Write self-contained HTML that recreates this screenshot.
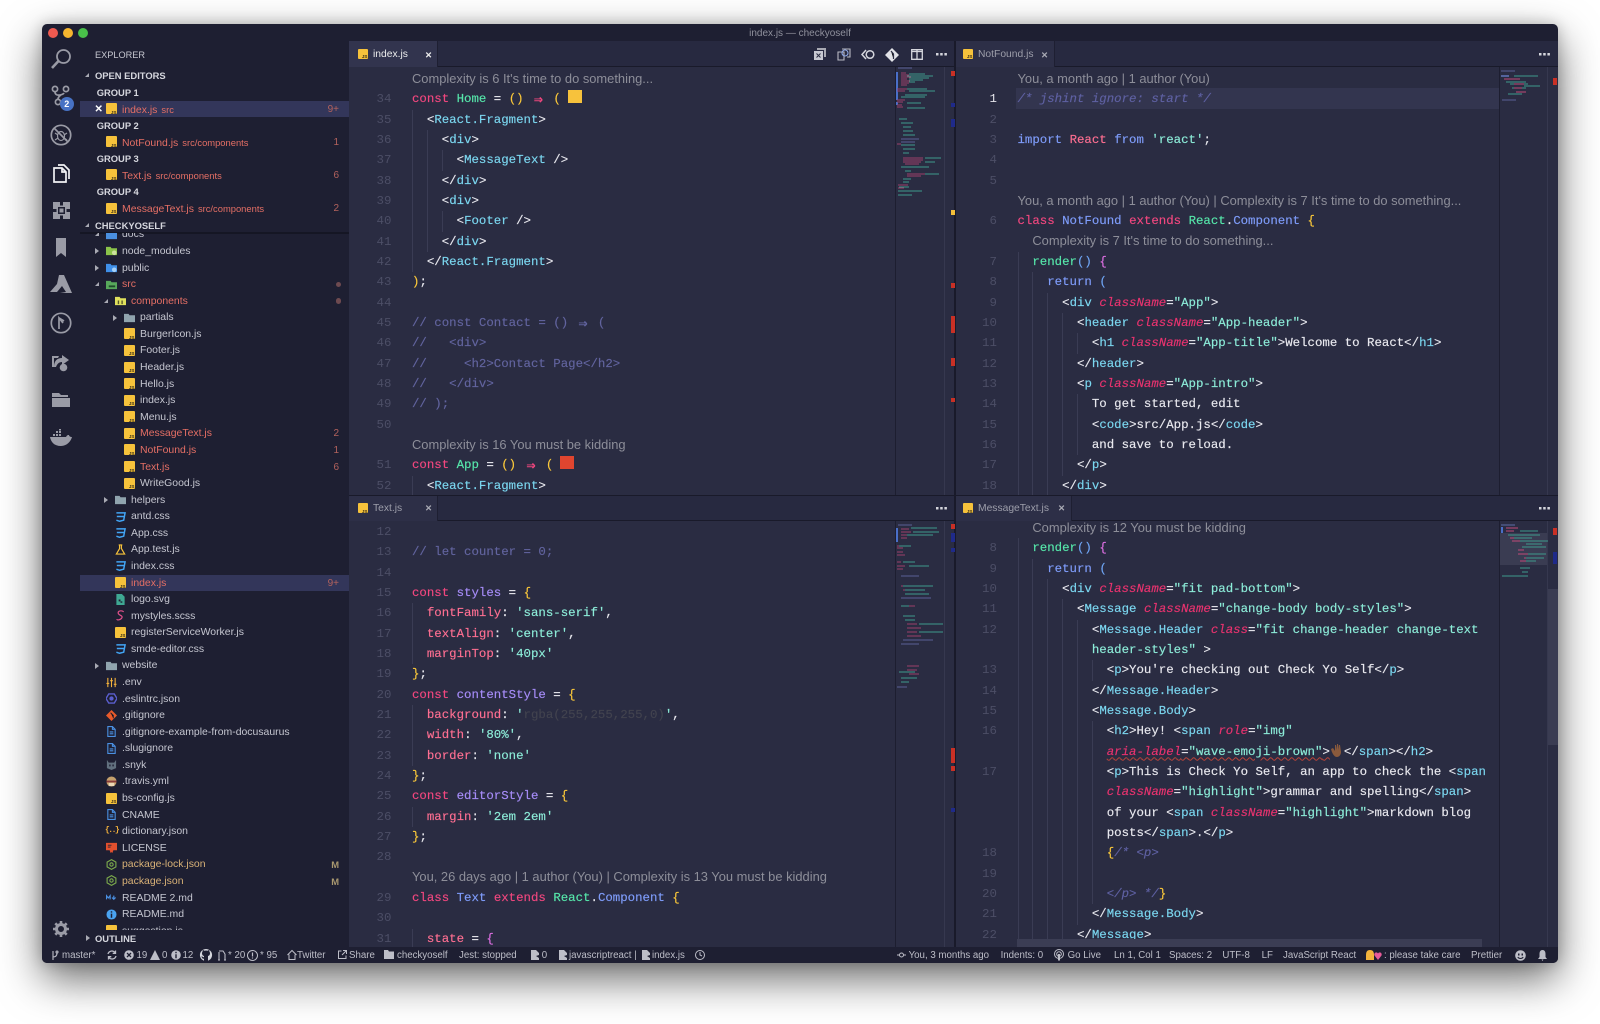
<!DOCTYPE html>
<html><head><meta charset="utf-8"><title>index.js — checkyoself</title>
<style>
html,body{margin:0;padding:0;background:#fff;width:1600px;height:1024px;overflow:hidden}
*{box-sizing:border-box}
#win{position:absolute;left:42px;top:24px;width:1516px;height:939px;background:#1e1f32;border-radius:5px;overflow:hidden;box-shadow:0 16px 42px rgba(0,0,0,.58),0 0 14px rgba(0,0,0,.2);font-family:"Liberation Sans",sans-serif;color:#c8c9d2}
#ov{position:absolute;left:0;top:0;width:1600px;height:1024px;overflow:hidden;font-family:"Liberation Sans",sans-serif;color:#c8c9d2;pointer-events:none}
#ov>*{position:absolute}
.dot{width:10px;height:10px;border-radius:50%;top:28px}
.title{left:600px;width:400px;top:26.5px;text-align:center;font-size:10px;line-height:14px;color:#8f909c}
.sec{font-size:9.4px;font-weight:bold;color:#d6d7de}
/* sidebar */
#side{left:80px;top:67.4px;width:269px;height:166px;overflow:hidden}
#files{left:80px;top:233px;width:269px;height:697px;overflow:hidden;padding-top:0}
#files .in{margin-top:-6.6px}
.r{height:16.58px;line-height:17.6px;position:relative;white-space:nowrap;font-size:10.45px;color:#c5c6d0}
.r.sel{background:#33365a}
.h{font-size:9.4px;font-weight:bold;color:#d6d7de;padding-left:15px}
.gr{font-size:9.4px;font-weight:bold;color:#d6d7de;padding-left:16.7px}
.d0{padding-left:42px}.d1{padding-left:51px}.d2{padding-left:60px}
.ic{position:absolute;width:11px;height:11px;top:2.5px}
.d0 .ic{left:26px}.d1 .ic{left:35px}.d2 .ic{left:44px}
.tw{position:absolute;top:5.5px;width:0;height:0}
.d0 .tw{left:15px}.d1 .tw{left:24px}.d2 .tw{left:33px}
.tw.c{border-left:4px solid #a9aab4;border-top:3px solid transparent;border-bottom:3px solid transparent}
.tw.o{border-right:4.5px solid #a9aab4;border-top:4.5px solid transparent;top:6px}
.h .tw{left:5px}
.js{background:#f6c23b;border-radius:1px;display:block}
.js:after{content:"JS";position:absolute;right:.5px;bottom:-.5px;font:bold 4.6px/5px "Liberation Sans",sans-serif;color:#3a3018}
.er{color:#e56f65}.mo{color:#d8b177}
.de{font-size:9.4px;margin-left:4px}
.bd{position:absolute;right:10px;top:0;font-size:10px;color:#b3625d}
.bd.m{color:#a9986f;font-weight:bold;font-size:9.4px}
.pd{position:absolute;right:8px;top:5.5px;width:5.5px;height:5.5px;border-radius:50%;background:#6e4a50}
/* editor */
.pane{background:#2a2c42;overflow:hidden}
.bar{background:#272940;border-bottom:1px solid #191a2a}
.tab{font-size:10.3px;line-height:28px;text-align:left;color:#9d9eaa;background:#2d2f47;border-right:1px solid #1e1f32}
.tab.on{background:#32344e;color:#eceded}
.cl{font-size:8.5px;font-weight:bold;line-height:14px;color:#aaabb5}
.code{position:absolute;font:12.4px/20.33px "Liberation Mono",monospace;color:#e9e9ef;white-space:normal;-webkit-text-stroke:.15px}
.l{height:20.33px;position:relative;white-space:pre}
.l>s{position:absolute;text-decoration:none;left:-63px;width:42.4px;text-align:right;color:#4c4e66;-webkit-text-stroke:0}
.l>s.cur{color:#e4e4ea}
.l u{display:inline-block;width:14.88px;height:20.33px;vertical-align:top;border-left:1px solid #3a3c54;text-decoration:none}
.l.lens{font:12.9px/20.33px "Liberation Sans",sans-serif;color:#8d8e99;-webkit-text-stroke:0;top:-.4px}
.k{color:#f2477f}.g{color:#56e8ab}.y{color:#fcc93a}.c{color:#7bd7f0}.s{color:#8cecd8}
.a{color:#e9336f;font-style:italic}.m{color:#62649f}.mi{color:#5f61a3;font-style:italic}
.b{color:#7f9dfb}.p{color:#a68cf8}.f{color:#ff6f92}.v{color:#dd6fe2}.lb{color:#6fa5f5}
.sq{text-decoration:underline wavy #b8443a 1px;text-underline-offset:2px}
.lig{display:inline-block;width:14.88px;text-align:center;font:bold 15px/20.33px "DejaVu Sans Mono",monospace;vertical-align:top}
.sw{position:absolute;left:155.4px;top:1.2px;width:13.6px;height:13.6px}
.mark{background:#c93025;width:4px}
.mb{background:#1f2a8a;width:4px}
.my{background:#f4bf3a;width:4px}
/* status */
.st{position:absolute;top:949px;font-size:9.7px;line-height:13px;color:#bdbec8;white-space:nowrap}
svg.i{position:absolute;overflow:visible}
</style></head>
<body>
<div id="win"></div>
<div id="ov">
<!-- traffic lights -->
<div class="dot" style="left:47.7px;background:#f05a50"></div>
<div class="dot" style="left:62.7px;background:#f6b62f"></div>
<div class="dot" style="left:77.7px;background:#49c04a"></div>
<div class="title">index.js — checkyoself</div>

<!-- activity icons -->
<svg class="i" style="left:48px;top:47px" width="26" height="26" viewBox="0 0 26 26" fill="none" stroke="#9a9ba6" stroke-width="1.8"><circle cx="15.5" cy="9.5" r="6.5"/><path d="M10.5 14L4 21" stroke-width="2.6"/></svg>
<svg class="i" style="left:50px;top:85px" width="24" height="26" viewBox="0 0 24 26" fill="none" stroke="#9a9ba6" stroke-width="1.7"><circle cx="5" cy="4" r="2.6"/><circle cx="16" cy="4" r="2.6"/><circle cx="8" cy="17" r="2.6"/><path d="M5 7c0 5 8 3 9 1M11 10c-2 1-3 3-3 4"/></svg>
<div style="left:59.8px;top:97.3px;width:14px;height:14px;border-radius:50%;background:#4772c4;color:#fff;font-size:9px;font-weight:bold;line-height:14px;text-align:center">2</div>
<svg class="i" style="left:50px;top:124px" width="22" height="22" viewBox="0 0 22 22" fill="none" stroke="#9a9ba6" stroke-width="1.7"><circle cx="11" cy="11" r="9.7"/><path d="M4 4l14 14"/><ellipse cx="11" cy="12" rx="3.500" ry="4.500" stroke-width="1.200"/><path d="M5 9l3 2M17 9l-3 2M5 16l3-2M17 16l-3-2" stroke-width="1.200"/></svg>
<svg class="i" style="left:53px;top:163px" width="18" height="20" viewBox="0 0 18 20" fill="none" stroke="#f2f2f5" stroke-width="1.7"><path d="M1 5h8l4 4v10H1z"/><path d="M9 5v4h4"/><path d="M5 2h6l5 5v9" /></svg>
<svg class="i" style="left:53px;top:202px" width="17" height="17" viewBox="0 0 17 17"><path fill="#9a9ba6" d="M0 0h7v3.500h3V0h7v7h-3.500v3H17v7h-7v-3.500H7V17H0v-7h3.500V7H0z"/><path fill="#1e1f32" d="M5 5h7v7H5z"/><path fill="#9a9ba6" d="M6.500 6.500h4v4h-4z"/></svg>
<svg class="i" style="left:56px;top:238px" width="11" height="20" viewBox="0 0 11 20"><path fill="#9a9ba6" d="M0 0h10v19l-5-4-5 4z"/></svg>
<svg class="i" style="left:50px;top:275px" width="22" height="20" viewBox="0 0 22 20"><path fill="#9a9ba6" d="M9 0h5l8 18H10l6-1-4-6-5 6H0L7 9z"/></svg>
<svg class="i" style="left:50px;top:312px" width="22" height="22" viewBox="0 0 22 22" fill="none" stroke="#9a9ba6" stroke-width="1.7"><circle cx="11" cy="11" r="9.7"/><path d="M9 17V6l4 5M9 6l5 3"/></svg>
<svg class="i" style="left:50px;top:351px" width="21" height="21" viewBox="0 0 21 21"><path fill="#9a9ba6" d="M2 5h7l-1 2H4v9H2zM4 16c0-6 3-9 8-9V4l7 5-7 5v-3c-3 0-5 2-6 5z"/><circle cx="13.500" cy="16.500" r="3.800" fill="#9a9ba6"/></svg>
<svg class="i" style="left:52px;top:391px" width="18" height="16" viewBox="0 0 18 16"><path fill="#9a9ba6" d="M0 2h7l2 2h7v2H0zM0 7h18v9H0z"/></svg>
<svg class="i" style="left:50px;top:429px" width="22" height="17" viewBox="0 0 22 17"><path fill="#9a9ba6" d="M0 8h16c1-2 2-2 3-2 0 1 1 2 3 2-1 4-5 9-11 9C4 17 1 13 0 8zM3 5h2v2H3zM6 5h2v2H6zM9 5h2v2H9zM6 2h2v2H6zM9 2h2v2H9zM9 0h2v1.500H9z"/></svg>
<svg class="i" style="left:53px;top:920.500px" width="16" height="16" viewBox="0 0 16 16"><circle cx="8" cy="8" r="4.500" fill="none" stroke="#9a9ba6" stroke-width="3"/><path stroke="#9a9ba6" stroke-width="2.600" d="M8 0v3M8 13v3M0 8h3M13 8h3M2.300 2.300l2.100 2.100M11.600 11.600l2.100 2.100M2.300 13.700l2.100-2.100M11.600 4.400l2.100-2.100"/></svg>

<!-- sidebar header -->
<div style="left:95px;top:48.500px;font-size:9.2px;line-height:13px;color:#c6c7d0">EXPLORER</div>

<div id="side">
<div class="r h" style="padding-left:15px"><i class="tw o" style="left:5px"></i>OPEN EDITORS</div>
<div class="r gr">GROUP 1</div>
<div class="r sel d0 er"><span style="position:absolute;left:14.500px;color:#fff;font-weight:bold;font-size:10px">✕</span><b class="ic js"></b>index.js<span class="de">src</span><span class="bd">9+</span></div>
<div class="r gr">GROUP 2</div>
<div class="r d0 er"><b class="ic js"></b>NotFound.js<span class="de">src/components</span><span class="bd">1</span></div>
<div class="r gr">GROUP 3</div>
<div class="r d0 er"><b class="ic js"></b>Text.js<span class="de">src/components</span><span class="bd">6</span></div>
<div class="r gr">GROUP 4</div>
<div class="r d0 er"><b class="ic js"></b>MessageText.js<span class="de">src/components</span><span class="bd">2</span></div>
<div class="r h"><i class="tw o" style="left:5px"></i>CHECKYOSELF</div>
</div>
<div style="left:80px;top:232px;width:269px;height:2px;background:#151624"></div>

<div id="files"><div class="in">
<div class="r d0"><i class="tw o"></i><svg class="ic" viewBox="0 0 12 12"><path fill="#4a8fe0" d="M0 2h5l1 1.500h6V11H0z"/></svg>docs</div>
<div class="r d0"><i class="tw c"></i><svg class="ic" viewBox="0 0 12 12"><path fill="#8bc34a" d="M0 2h5l1 1.500h6V11H0z"/><circle cx="9" cy="8.500" r="2.500" fill="#cde29f"/></svg>node_modules</div>
<div class="r d0"><i class="tw c"></i><svg class="ic" viewBox="0 0 12 12"><path fill="#3f8fe8" d="M0 2h5l1 1.500h6V11H0z"/><circle cx="9" cy="8.500" r="2.500" fill="#a6d0f7"/></svg>public</div>
<div class="r d0 er"><i class="tw o"></i><svg class="ic" viewBox="0 0 12 12"><path fill="#57a85b" d="M0 2h5l1 1.500h6V11H0z"/><path fill="#1f4a2a" d="M3 7h7v2H3z"/></svg>src<i class="pd"></i></div>
<div class="r d1 er"><i class="tw o"></i><svg class="ic" viewBox="0 0 12 12"><path fill="#dfe05c" d="M0 2h5l1 1.500h6V11H0z"/><path fill="#55562a" d="M3 6h1.500v4H3zM7 6h1.500v4H7z"/></svg>components<i class="pd"></i></div>
<div class="r d2"><i class="tw c"></i><svg class="ic" viewBox="0 0 12 12"><path fill="#90a4ae" d="M0 2h5l1 1.500h6V11H0z"/></svg>partials</div>
<div class="r d2"><b class="ic js"></b>BurgerIcon.js</div>
<div class="r d2"><b class="ic js"></b>Footer.js</div>
<div class="r d2"><b class="ic js"></b>Header.js</div>
<div class="r d2"><b class="ic js"></b>Hello.js</div>
<div class="r d2"><b class="ic js"></b>index.js</div>
<div class="r d2"><b class="ic js"></b>Menu.js</div>
<div class="r d2 er"><b class="ic js"></b>MessageText.js<span class="bd">2</span></div>
<div class="r d2 er"><b class="ic js"></b>NotFound.js<span class="bd">1</span></div>
<div class="r d2 er"><b class="ic js"></b>Text.js<span class="bd">6</span></div>
<div class="r d2"><b class="ic js"></b>WriteGood.js</div>
<div class="r d1"><i class="tw c"></i><svg class="ic" viewBox="0 0 12 12"><path fill="#90a4ae" d="M0 2h5l1 1.500h6V11H0z"/></svg>helpers</div>
<div class="r d1"><svg class="ic" viewBox="0 0 12 12" fill="none" stroke="#42a5f5" stroke-width="1.600"><path d="M1.500 2h9.500L9.500 10 5 11.200 1.500 10M2 6h7.500"/></svg>antd.css</div>
<div class="r d1"><svg class="ic" viewBox="0 0 12 12" fill="none" stroke="#42a5f5" stroke-width="1.600"><path d="M1.500 2h9.500L9.500 10 5 11.200 1.500 10M2 6h7.500"/></svg>App.css</div>
<div class="r d1"><svg class="ic" viewBox="0 0 12 12" fill="none" stroke="#f6c23b" stroke-width="1.300"><path d="M4 1h4M5 1v4L1.500 11h9L7 5V1"/></svg>App.test.js</div>
<div class="r d1"><svg class="ic" viewBox="0 0 12 12" fill="none" stroke="#42a5f5" stroke-width="1.600"><path d="M1.500 2h9.500L9.500 10 5 11.200 1.500 10M2 6h7.500"/></svg>index.css</div>
<div class="r sel d1 er"><b class="ic js"></b>index.js<span class="bd">9+</span></div>
<div class="r d1"><svg class="ic" viewBox="0 0 12 12"><path fill="#3fa893" d="M1.500 0h6L10.500 3v9h-9z"/><path fill="#1e1f32" d="M4 6h2v2H4zM6 8h2v1.500H6z"/></svg>logo.svg</div>
<div class="r d1"><svg class="ic" viewBox="0 0 12 12" fill="none" stroke="#e0508a" stroke-width="1.300"><path d="M9.500 2C7 0 3 1 3.500 3.500S9 6 7.500 8.500 2 11.500 2 10"/></svg>mystyles.scss</div>
<div class="r d1"><b class="ic js"></b>registerServiceWorker.js</div>
<div class="r d1"><svg class="ic" viewBox="0 0 12 12" fill="none" stroke="#42a5f5" stroke-width="1.600"><path d="M1.500 2h9.500L9.500 10 5 11.200 1.500 10M2 6h7.500"/></svg>smde-editor.css</div>
<div class="r d0"><i class="tw c"></i><svg class="ic" viewBox="0 0 12 12"><path fill="#90a4ae" d="M0 2h5l1 1.500h6V11H0z"/></svg>website</div>
<div class="r d0"><svg class="ic" viewBox="0 0 12 12" stroke="#f2b13c" stroke-width="1.200" fill="none"><path d="M2 1v10M6 1v10M10 1v10M0.500 7h3M4.500 4h3M8.500 8h3"/></svg>.env</div>
<div class="r d0"><svg class="ic" viewBox="0 0 12 12" fill="none" stroke="#5b5fd0" stroke-width="1.500"><path d="M3 1h6l3 5-3 5H3L0 6z"/><circle cx="6" cy="6" r="1.600" fill="#5b5fd0"/></svg>.eslintrc.json</div>
<div class="r d0"><svg class="ic" viewBox="0 0 12 12"><path fill="#e85a2a" d="M6 0l6 6-6 6-6-6z"/><path stroke="#1e1f32" stroke-width="1" d="M5 3l3 3v3"/></svg>.gitignore</div>
<div class="r d0"><svg class="ic" viewBox="0 0 12 12" fill="none" stroke="#4a90e2" stroke-width="1.200"><path d="M2 .6h5l3 3V11.400H2zM7 .6v3h3M4 6.500h4M4 8.500h4"/></svg>.gitignore-example-from-docusaurus</div>
<div class="r d0"><svg class="ic" viewBox="0 0 12 12" fill="none" stroke="#4a90e2" stroke-width="1.200"><path d="M2 .6h5l3 3V11.400H2zM7 .6v3h3M4 6.500h4M4 8.500h4"/></svg>.slugignore</div>
<div class="r d0"><svg class="ic" viewBox="0 0 12 12"><path fill="#61707e" d="M1 1l2 3h6l2-3v9l-5 2-5-2z"/><path fill="#1e1f32" d="M3.500 6h1.500v2H3.500zM7 6h1.500v2H7z"/></svg>.snyk</div>
<div class="r d0"><svg class="ic" viewBox="0 0 12 12"><circle cx="6" cy="6" r="5.500" fill="#c4a06c"/><path fill="#8a3b3b" d="M.5 5h11v2H.5z"/><path fill="#ead7b6" d="M3 7.500h6V11H3z"/></svg>.travis.yml</div>
<div class="r d0"><b class="ic js"></b>bs-config.js</div>
<div class="r d0"><svg class="ic" viewBox="0 0 12 12" fill="none" stroke="#4a90e2" stroke-width="1.200"><path d="M2 .6h5l3 3V11.400H2zM7 .6v3h3M4 6.500h4M4 8.500h4"/></svg>CNAME</div>
<div class="r d0"><span style="position:absolute;left:25px;color:#f2b13c;font:bold 8px/16px 'Liberation Mono',monospace;letter-spacing:-1.5px">{..}</span>dictionary.json</div>
<div class="r d0"><svg class="ic" viewBox="0 0 12 12"><path fill="#e2502e" d="M0 1h12v8H8l-1 3-1-1-1 1-1-3H0z"/><path fill="#1e1f32" d="M2 3h4v1H2zM2 5h3v1H2z"/></svg>LICENSE</div>
<div class="r d0 mo"><svg class="ic" viewBox="0 0 12 12" fill="none" stroke="#7cab4c" stroke-width="1.200"><path d="M6 .7l4.800 2.700v5.200L6 11.300 1.200 8.600V3.400z"/><circle cx="6" cy="6" r="1.800"/></svg>package-lock.json<span class="bd m">M</span></div>
<div class="r d0 mo"><svg class="ic" viewBox="0 0 12 12" fill="none" stroke="#7cab4c" stroke-width="1.200"><path d="M6 .7l4.800 2.700v5.200L6 11.300 1.200 8.600V3.400z"/><circle cx="6" cy="6" r="1.800"/></svg>package.json<span class="bd m">M</span></div>
<div class="r d0"><svg class="ic" viewBox="0 0 12 12" fill="none" stroke="#4a90e2" stroke-width="1.300"><path d="M.5 8V4l2 2.500L4.500 4v4M8.500 4v4M6.500 6l2 2 2-2"/></svg>README 2.md</div>
<div class="r d0"><svg class="ic" viewBox="0 0 12 12"><circle cx="6" cy="6" r="5.500" fill="#4aa3f0"/><path fill="#1e1f32" d="M5.200 5h1.600v4.500H5.200zM5.200 2.500h1.600v1.500H5.200z"/></svg>README.md</div>
<div class="r d0"><b class="ic js"></b>suggestion.js</div>
</div></div>
<div class="sec" style="left:95px;top:931.500px;line-height:13px"><i class="tw c" style="left:-9px;top:3px"></i>OUTLINE</div>

<!-- PANE 1 -->
<div class="pane" style="left:349px;top:41px;width:605.500px;height:454px"></div>
<div class="bar" style="left:349px;top:41px;width:605.500px;height:26px"></div>
<div class="tab on" style="left:349px;top:41px;width:89px;height:25.500px;padding-left:24px">index.js</div>
<b class="js" style="left:358px;top:48.500px;width:10px;height:10px"></b>
<span class="cl" style="left:425px;top:48px;color:#eee">✕</span>
<svg class="i" style="left:813px;top:48px" width="14" height="13" viewBox="0 0 14 13"><path fill="#a9aab4" d="M4 0h9v9h-2V2H4z"/><path fill="#c8c9d2" d="M1 3h9v9H1z"/><path stroke="#2a2c42" d="M3.500 5.500l4 4M7.500 5.500l-4 4"/></svg>
<svg class="i" style="left:837px;top:48px" width="14" height="13" viewBox="0 0 14 13" fill="none" stroke="#b9bac4" stroke-width="1.100"><path d="M5 1h8v8h-3M1 4h6v8H1z"/><circle cx="8" cy="5" r="3" stroke="#8fa8e6"/></svg>
<svg class="i" style="left:861px;top:49px" width="14" height="11" viewBox="0 0 14 11" fill="none" stroke="#d5d6dd" stroke-width="1.500"><path d="M5 1L1 5.500 5 10"/><circle cx="9" cy="5.500" r="3.800"/></svg>
<svg class="i" style="left:885px;top:47.500px" width="14" height="14" viewBox="0 0 14 14"><path fill="#e2e3e8" d="M7 0l7 7-7 7-7-7z"/><path stroke="#2a2c42" stroke-width="1.200" d="M6 3l2.500 3v5"/></svg>
<svg class="i" style="left:910.500px;top:49px" width="12" height="11" viewBox="0 0 12 11" fill="none" stroke="#d5d6dd" stroke-width="1.300"><path d="M.7.700h10.600v9.600H.7zM6 .7v9.600M.7 2.500h10.600"/></svg>
<svg class="i" style="left:935.500px;top:53px" width="11" height="3" viewBox="0 0 11 3"><path fill="#d5d6dd" d="M0 0h2.500v2.500H0zM4.200 0h2.500v2.500H4.200zM8.400 0h2.500v2.500H8.400z"/></svg>

<div style="left:349px;top:67px;width:605px;height:428px;overflow:hidden">
<div class="code" style="left:63px;top:2px">
<div class="l lens">Complexity is 6 It's time to do something...</div>
<div class="l"><s>34</s><span class="k">const</span> <span class="g">Home</span> = <span class="y">()</span> <span class="lig k">⇒</span> <span class="y">(</span><i class="sw" style="background:#f7c23c;left:156px;top:.4px"></i></div>
<div class="l"><s>35</s><u></u>&lt;<span class="c">React.Fragment</span>&gt;</div>
<div class="l"><s>36</s><u></u><u></u>&lt;<span class="c">div</span>&gt;</div>
<div class="l"><s>37</s><u></u><u></u><u></u>&lt;<span class="c">MessageText</span> /&gt;</div>
<div class="l"><s>38</s><u></u><u></u>&lt;/<span class="c">div</span>&gt;</div>
<div class="l"><s>39</s><u></u><u></u>&lt;<span class="c">div</span>&gt;</div>
<div class="l"><s>40</s><u></u><u></u><u></u>&lt;<span class="c">Footer</span> /&gt;</div>
<div class="l"><s>41</s><u></u><u></u>&lt;/<span class="c">div</span>&gt;</div>
<div class="l"><s>42</s><u></u>&lt;/<span class="c">React.Fragment</span>&gt;</div>
<div class="l"><s>43</s><span class="y">)</span>;</div>
<div class="l"><s>44</s></div>
<div class="l m"><s>45</s>// const Contact = () <span class="lig">⇒</span> (</div>
<div class="l m"><s>46</s>//   &lt;div&gt;</div>
<div class="l m"><s>47</s>//     &lt;h2&gt;Contact Page&lt;/h2&gt;</div>
<div class="l m"><s>48</s>//   &lt;/div&gt;</div>
<div class="l m"><s>49</s>// );</div>
<div class="l"><s>50</s></div>
<div class="l lens">Complexity is 16 You must be kidding</div>
<div class="l"><s>51</s><span class="k">const</span> <span class="g">App</span> = <span class="y">()</span> <span class="lig k">⇒</span> <span class="y">(</span><i class="sw" style="background:#e0452f;left:148px;top:.4px"></i></div>
<div class="l"><s>52</s><u></u>&lt;<span class="c">React.Fragment</span>&gt;</div>
</div></div>

<!-- PANE 2 -->
<div class="pane" style="left:955px;top:41px;width:603px;height:454px"></div>
<div class="bar" style="left:955px;top:41px;width:603px;height:26px"></div>
<div class="tab" style="left:955px;top:41px;width:100px;height:25.500px;padding-left:23px">NotFound.js</div>
<b class="js" style="left:963px;top:48.500px;width:10px;height:10px"></b>
<span class="cl" style="left:1041px;top:48px">✕</span>
<svg class="i" style="left:1539px;top:53px" width="11" height="3" viewBox="0 0 11 3"><path fill="#d5d6dd" d="M0 0h2.500v2.500H0zM4.200 0h2.500v2.500H4.200zM8.400 0h2.500v2.500H8.400z"/></svg>
<div style="left:1016px;top:88px;width:482.500px;height:20.800px;background:#33354f"></div>

<div style="left:955px;top:67px;width:603px;height:428px;overflow:hidden">
<div class="code" style="left:62.500px;top:2px">
<div class="l lens">You, a month ago | 1 author (You)</div>
<div class="l mi"><s class="cur" style="font-style:normal">1</s>/* jshint ignore: start */</div>
<div class="l"><s>2</s></div>
<div class="l"><s>3</s><span class="b">import</span> <span class="f">React</span> <span class="b">from</span> <span class="s">'react'</span>;</div>
<div class="l"><s>4</s></div>
<div class="l"><s>5</s></div>
<div class="l lens">You, a month ago | 1 author (You) | Complexity is 7 It's time to do something...</div>
<div class="l"><s>6</s><span class="k">class</span> <span class="b">NotFound</span> <span class="k">extends</span> <span class="g">React</span>.<span class="b">Component</span> <span class="y">{</span></div>
<div class="l lens" style="padding-left:14.880px">Complexity is 7 It's time to do something...</div>
<div class="l"><s>7</s><u></u><span class="g">render</span><span class="lb">()</span> <span class="v">{</span></div>
<div class="l"><s>8</s><u></u><u></u><span class="b">return</span> <span class="lb">(</span></div>
<div class="l"><s>9</s><u></u><u></u><u></u>&lt;<span class="c">div</span> <span class="a">className</span>=<span class="s">"App"</span>&gt;</div>
<div class="l"><s>10</s><u></u><u></u><u></u><u></u>&lt;<span class="c">header</span> <span class="a">className</span>=<span class="s">"App-header"</span>&gt;</div>
<div class="l"><s>11</s><u></u><u></u><u></u><u></u><u></u>&lt;<span class="c">h1</span> <span class="a">className</span>=<span class="s">"App-title"</span>&gt;Welcome to React&lt;/<span class="c">h1</span>&gt;</div>
<div class="l"><s>12</s><u></u><u></u><u></u><u></u>&lt;/<span class="c">header</span>&gt;</div>
<div class="l"><s>13</s><u></u><u></u><u></u><u></u>&lt;<span class="c">p</span> <span class="a">className</span>=<span class="s">"App-intro"</span>&gt;</div>
<div class="l"><s>14</s><u></u><u></u><u></u><u></u><u></u>To get started, edit</div>
<div class="l"><s>15</s><u></u><u></u><u></u><u></u><u></u>&lt;<span class="c">code</span>&gt;src/App.js&lt;/<span class="c">code</span>&gt;</div>
<div class="l"><s>16</s><u></u><u></u><u></u><u></u><u></u>and save to reload.</div>
<div class="l"><s>17</s><u></u><u></u><u></u><u></u>&lt;/<span class="c">p</span>&gt;</div>
<div class="l"><s>18</s><u></u><u></u><u></u>&lt;/<span class="c">div</span>&gt;</div>
</div></div>

<!-- PANE 3 -->
<div class="pane" style="left:349px;top:495px;width:605.500px;height:452px;border-top:1px solid #191a2a"></div>
<div class="bar" style="left:349px;top:495px;width:605.500px;height:26px;border-top:1px solid #191a2a"></div>
<div class="tab" style="left:349px;top:496px;width:89px;height:24.500px;padding-left:24px;line-height:25px">Text.js</div>
<b class="js" style="left:358px;top:503px;width:10px;height:10px"></b>
<span class="cl" style="left:425px;top:501px">✕</span>
<svg class="i" style="left:935.500px;top:506.500px" width="11" height="3" viewBox="0 0 11 3"><path fill="#d5d6dd" d="M0 0h2.500v2.500H0zM4.200 0h2.500v2.500H4.200zM8.400 0h2.500v2.500H8.400z"/></svg>

<div style="left:349px;top:521px;width:605px;height:426px;overflow:hidden">
<div class="code" style="left:63px;top:1px">
<div class="l"><s>12</s></div>
<div class="l m"><s>13</s>// let counter = 0;</div>
<div class="l"><s>14</s></div>
<div class="l"><s>15</s><span class="k">const</span> <span class="p">styles</span> = <span class="y">{</span></div>
<div class="l"><s>16</s><u></u><span class="f">fontFamily</span>: <span class="s">'sans-serif'</span>,</div>
<div class="l"><s>17</s><u></u><span class="f">textAlign</span>: <span class="s">'center'</span>,</div>
<div class="l"><s>18</s><u></u><span class="f">marginTop</span>: <span class="s">'40px'</span></div>
<div class="l"><s>19</s><span class="y">}</span>;</div>
<div class="l"><s>20</s><span class="k">const</span> <span class="p">contentStyle</span> = <span class="y">{</span></div>
<div class="l"><s>21</s><u></u><span class="f">background</span>: <span class="s">'<span style="color:#42434f">rgba(255,255,255,0)</span>'</span>,</div>
<div class="l"><s>22</s><u></u><span class="f">width</span>: <span class="s">'80%'</span>,</div>
<div class="l"><s>23</s><u></u><span class="f">border</span>: <span class="s">'none'</span></div>
<div class="l"><s>24</s><span class="y">}</span>;</div>
<div class="l"><s>25</s><span class="k">const</span> <span class="p">editorStyle</span> = <span class="y">{</span></div>
<div class="l"><s>26</s><u></u><span class="f">margin</span>: <span class="s">'2em 2em'</span></div>
<div class="l"><s>27</s><span class="y">}</span>;</div>
<div class="l"><s>28</s></div>
<div class="l lens">You, 26 days ago | 1 author (You) | Complexity is 13 You must be kidding</div>
<div class="l"><s>29</s><span class="k">class</span> <span class="b">Text</span> <span class="k">extends</span> <span class="g">React</span>.<span class="b">Component</span> <span class="y">{</span></div>
<div class="l"><s>30</s></div>
<div class="l"><s>31</s><u></u><span class="f">state</span> = <span class="v">{</span></div>
</div></div>

<!-- PANE 4 -->
<div class="pane" style="left:955px;top:495px;width:603px;height:452px;border-top:1px solid #191a2a"></div>
<div class="bar" style="left:955px;top:495px;width:603px;height:26px;border-top:1px solid #191a2a"></div>
<div class="tab" style="left:955px;top:496px;width:116.500px;height:24.500px;padding-left:23px;line-height:25px">MessageText.js</div>
<b class="js" style="left:963px;top:503px;width:10px;height:10px"></b>
<span class="cl" style="left:1058px;top:501px">✕</span>
<svg class="i" style="left:1539px;top:506.500px" width="11" height="3" viewBox="0 0 11 3"><path fill="#d5d6dd" d="M0 0h2.500v2.500H0zM4.200 0h2.500v2.500H4.200zM8.400 0h2.500v2.500H8.400z"/></svg>

<div style="left:955px;top:521px;width:603px;height:426px;overflow:hidden">
<div class="code" style="left:62.500px;top:-3px">
<div class="l lens" style="padding-left:14.880px">Complexity is 12 You must be kidding</div>
<div class="l"><s>8</s><u></u><span class="g">render</span><span class="lb">()</span> <span class="v">{</span></div>
<div class="l"><s>9</s><u></u><u></u><span class="b">return</span> <span class="lb">(</span></div>
<div class="l"><s>10</s><u></u><u></u><u></u>&lt;<span class="c">div</span> <span class="a">className</span>=<span class="s">"fit pad-bottom"</span>&gt;</div>
<div class="l"><s>11</s><u></u><u></u><u></u><u></u>&lt;<span class="c">Message</span> <span class="a">className</span>=<span class="s">"change-body body-styles"</span>&gt;</div>
<div class="l"><s>12</s><u></u><u></u><u></u><u></u><u></u>&lt;<span class="c">Message.Header</span> <span class="a">class</span>=<span class="s">"fit change-header change-text</span></div>
<div class="l"><u></u><u></u><u></u><u></u><u></u><span class="s">header-styles"</span> &gt;</div>
<div class="l"><s>13</s><u></u><u></u><u></u><u></u><u></u><u></u>&lt;<span class="c">p</span>&gt;You're checking out Check Yo Self&lt;/<span class="c">p</span>&gt;</div>
<div class="l"><s>14</s><u></u><u></u><u></u><u></u><u></u>&lt;/<span class="c">Message.Header</span>&gt;</div>
<div class="l"><s>15</s><u></u><u></u><u></u><u></u><u></u>&lt;<span class="c">Message.Body</span>&gt;</div>
<div class="l"><s>16</s><u></u><u></u><u></u><u></u><u></u><u></u>&lt;<span class="c">h2</span>&gt;Hey! &lt;<span class="c">span</span> <span class="a">role</span>=<span class="s">"img"</span></div>
<div class="l"><u></u><u></u><u></u><u></u><u></u><u></u><span class="sq"><span class="a">aria-label</span>=<span class="s">"wave-emoji-brown"</span>&gt;</span><svg width="14" height="14" viewBox="0 0 14 14" style="vertical-align:-2px"><path fill="#8a5a3c" d="M3 5l2 3V2l1 0 1 5V1l1 0 1 6V2l1 0 1 7c0 3-2 5-4 5-3 0-5-4-6-8z"/></svg>&lt;/<span class="c">span</span>&gt;&lt;/<span class="c">h2</span>&gt;</div>
<div class="l"><s>17</s><u></u><u></u><u></u><u></u><u></u><u></u>&lt;<span class="c">p</span>&gt;This is Check Yo Self, an app to check the &lt;<span class="c">span</span></div>
<div class="l"><u></u><u></u><u></u><u></u><u></u><u></u><span class="a">className</span>=<span class="s">"highlight"</span>&gt;grammar and spelling&lt;/<span class="c">span</span>&gt;</div>
<div class="l"><u></u><u></u><u></u><u></u><u></u><u></u>of your &lt;<span class="c">span</span> <span class="a">className</span>=<span class="s">"highlight"</span>&gt;markdown blog</div>
<div class="l"><u></u><u></u><u></u><u></u><u></u><u></u>posts&lt;/<span class="c">span</span>&gt;.&lt;/<span class="c">p</span>&gt;</div>
<div class="l"><s>18</s><u></u><u></u><u></u><u></u><u></u><u></u><span class="y">{</span><span class="mi">/* &lt;p&gt;</span></div>
<div class="l"><s>19</s><u></u><u></u><u></u><u></u><u></u><u></u></div>
<div class="l"><s>20</s><u></u><u></u><u></u><u></u><u></u><u></u><span class="mi">&lt;/p&gt; */</span><span class="y">}</span></div>
<div class="l"><s>21</s><u></u><u></u><u></u><u></u><u></u>&lt;/<span class="c">Message.Body</span>&gt;</div>
<div class="l"><s>22</s><u></u><u></u><u></u><u></u>&lt;/<span class="c">Message</span>&gt;</div>
</div></div>

<!-- separators + minimap columns -->
<div style="left:954px;top:41px;width:1.500px;height:906px;background:#191a2a"></div>
<div style="left:895px;top:67px;width:1px;height:428px;background:#1d1e30"></div>
<div style="left:895px;top:521px;width:1px;height:426px;background:#1d1e30"></div>
<div style="left:1498.500px;top:67px;width:1px;height:428px;background:#1d1e30"></div>
<div style="left:1498.500px;top:521px;width:1px;height:426px;background:#1d1e30"></div>
<div style="left:944px;top:67px;width:1px;height:428px;background:#36384f"></div>
<div style="left:944px;top:521px;width:1px;height:426px;background:#36384f"></div>
<div style="left:1547px;top:67px;width:1px;height:428px;background:#36384f"></div>
<div style="left:1547px;top:521px;width:1px;height:426px;background:#36384f"></div>

<!-- overview marks -->
<div class="mark" style="left:950.500px;top:71px;height:4.500px"></div>
<div class="mb" style="left:950.500px;top:103px;height:4px"></div>
<div class="mb" style="left:950.500px;top:119px;height:8px"></div>
<div class="my" style="left:950.500px;top:210px;height:4.500px"></div>
<div class="mark" style="left:950.500px;top:283px;height:4.500px"></div>
<div class="mark" style="left:950.500px;top:316px;height:17px"></div>
<div class="mark" style="left:950.500px;top:358px;height:8px"></div>
<div class="mark" style="left:950.500px;top:398px;height:4px"></div>
<div class="mark" style="left:950.500px;top:524px;height:4.500px"></div>
<div class="mb" style="left:950.500px;top:533px;height:9px"></div>
<div class="mb" style="left:950.500px;top:548px;height:4px"></div>
<div class="mark" style="left:950.500px;top:748px;height:15px"></div>
<div class="mark" style="left:950.500px;top:766px;height:5px"></div>
<div class="mb" style="left:950.500px;top:808px;height:4px"></div>
<div class="mark" style="left:1553px;top:78px;height:7px"></div>
<div class="mark" style="left:1553px;top:528px;height:7px"></div>
<div class="mb" style="left:1553px;top:552px;height:12px"></div>
<div class="mark" style="left:1553px;top:670px;height:6px"></div>
<div style="left:1548px;top:589px;width:10px;height:156px;background:#3a3c52"></div>
<div style="left:1499.500px;top:533px;width:47.500px;height:32px;background:#3a3c52"></div>
<div style="left:1017px;top:939px;width:464.500px;height:8px;background:#3b3d54"></div>

<!-- minimaps -->
<svg class="i" style="left:895px;top:67px" width="49" height="130" viewBox="0 0 49 130" fill="none" stroke-width="1">
<path stroke="#4a6fc8" stroke-width="2" d="M2 5v28M2 35v3"/>
<path stroke="#9c3f6a" d="M6 6h5M6 8h8M6 10h10M6 12h6M6 14h9M6 16h8M6 18h6M2 22h12M2 24h8M2 33h8M2 35h6M2 38h5M2 40h6M2 77h4M8 91h20M8 93h20M8 95h18M10 97h14M12 107h18M12 109h14M3 118h10M3 121h6"/>
<path stroke="#3f9a8c" d="M14 7h16M12 9h26M14 11h20M14 13h14M14 15h6M12 22h20M14 24h26M10 28h22M6 30h24M12 36h14M12 41h18M4 52h8M6 56h12M8 60h8M8 64h10M8 68h12M6 78h14M8 82h12M8 86h6M30 91h16M30 95h10M6 100h28M10 104h6M30 107h14M8 112h8M8 115h6M4 120h10M3 124h24M3 128h14"/>
<path stroke="#5b5f96" d="M3 1h14M6 72h18M6 75h14"/>
</svg>
<svg class="i" style="left:1499.500px;top:70px" width="48" height="36" viewBox="0 0 48 36" fill="none">
<path stroke="#5b5f96" d="M1 1h14M2 30h14"/><path stroke="#7f9dfb" d="M1 6h8"/><path stroke="#3f9a8c" d="M14 6h24M6 12h20M10 14h18M12 18h14M24 16h16M8 24h14"/>
<path stroke="#c04a78" d="M4 9h16M14 14h10M14 18h8M16 22h10"/>
</svg>
<svg class="i" style="left:895px;top:524px" width="49" height="165" viewBox="0 0 49 165" fill="none">
<path stroke="#4a6fc8" stroke-width="2" d="M2 4v14"/>
<path stroke="#9c3f6a" d="M6 5h8M6 8h10M6 11h8M6 14h6M2 22h10M2 24h6M2 28h6M2 31h8M2 38h4M2 42h8M2 45h6M6 62h10M8 66h6M8 82h12M12 100h10M12 104h14M12 108h10M12 112h14M12 142h12M12 146h10M14 150h10"/>
<path stroke="#3f9a8c" d="M16 4h26M18 8h26M12 11h26M4 22h12M8 38h12M14 42h20M8 62h30M10 66h20M10 70h24M6 82h8M8 92h12M10 96h10M24 100h24M24 108h24M4 148h16M6 154h16M6 158h8"/>
<path stroke="#5b5f96" d="M3 1h14M6 52h18M6 74h30M8 116h30M6 120h18M2 163h10"/>
</svg>
<svg class="i" style="left:1499.500px;top:524px" width="48" height="62" viewBox="0 0 48 62" fill="none">
<path stroke="#4a6fc8" stroke-width="2" d="M2 3v6"/>
<path stroke="#5e6ea8" d="M1 1h14"/>
<path stroke="#c04a78" d="M6 4h12M6 7h8M10 14h14M12 17h10M24 23h8M18 26h6M18 30h12M24 34h6M20 37h8"/>
<path stroke="#3f9a8c" d="M20 7h18M8 11h32M14 14h18M20 17h28M26 20h16M22 23h24M28 30h18M26 34h18M26 37h10M20 44h10M22 48h6M2 52h26"/>
</svg>

<!-- status bar -->
<div style="left:42px;top:947px;width:1516px;height:16px;background:#1e1f32;border-radius:0 0 5px 5px"></div>
<svg class="i" style="left:51px;top:950px" width="8" height="11" viewBox="0 0 8 11" fill="none" stroke="#bdbec8" stroke-width="1.100"><path d="M2 1v9M2 7c3 0 4-2 4-4"/><circle cx="6" cy="2" r="1"/></svg>
<span class="st" style="left:62px">master*</span>
<svg class="i" style="left:106.500px;top:950px" width="10" height="10" viewBox="0 0 10 10" fill="none" stroke="#bdbec8" stroke-width="1.300"><path d="M1 4a4 4 0 0 1 7-1.500M9 6a4 4 0 0 1-7 1.500M8.500.5v2.800H5.700M1.500 9.500V6.700h2.800"/></svg>
<svg class="i" style="left:124px;top:950px" width="10" height="10" viewBox="0 0 10 10"><circle cx="5" cy="5" r="4.800" fill="#bdbec8"/><path stroke="#1e1f32" stroke-width="1.300" d="M3 3l4 4M7 3l-4 4"/></svg>
<span class="st" style="left:136.500px">19</span>
<svg class="i" style="left:150px;top:950px" width="10" height="10" viewBox="0 0 10 10"><path fill="#bdbec8" d="M5 0l5 10H0z"/></svg>
<span class="st" style="left:162px">0</span>
<svg class="i" style="left:170.500px;top:950px" width="10" height="10" viewBox="0 0 10 10"><circle cx="5" cy="5" r="4.800" fill="#bdbec8"/><path fill="#1e1f32" d="M4.300 4.200h1.400v4H4.300zM4.300 1.800h1.400v1.400H4.300z"/></svg>
<span class="st" style="left:182.500px">12</span>
<svg class="i" style="left:200px;top:949px" width="12" height="12" viewBox="0 0 12 12"><path fill="#d5d6dd" d="M6 0a6 6 0 0 0-2 11.700v-2C2.500 10 2 9 2 8.500 1 8 1 7.500 2 7.500c.7 0 1 .8 2 .8V7c-1.500-.3-2-1.500-2-2.700 0-.7.200-1.300.6-1.700-.1-.5 0-1.200.2-1.500.6 0 1.200.3 1.600.6a6 6 0 0 1 3.200 0c.4-.3 1-.6 1.600-.6.200.3.300 1 .2 1.500.4.400.6 1 .6 1.700 0 1.200-.5 2.400-2 2.700v4.700A6 6 0 0 0 6 0z"/></svg>
<svg class="i" style="left:217px;top:949px" width="10" height="12" viewBox="0 0 10 12" fill="none" stroke="#bdbec8" stroke-width="1.100"><path d="M2 3v8M8 5v6M2 2h4l2 3M1 11h2M7 11h2"/></svg>
<span class="st" style="left:228px">* 20</span>
<svg class="i" style="left:247px;top:949.500px" width="11" height="11" viewBox="0 0 11 11" fill="none" stroke="#bdbec8"><circle cx="5.500" cy="5.500" r="5"/><path d="M5.500 2.500v4M5.500 7.500v1" stroke-width="1.200"/></svg>
<span class="st" style="left:260px">* 95</span>
<svg class="i" style="left:287px;top:950px" width="10" height="10" viewBox="0 0 10 10" fill="none" stroke="#bdbec8"><path d="M.5 5L5 .5 9.500 5M2 4.500V9.500h6V4.500"/></svg>
<span class="st" style="left:297px">Twitter</span>
<svg class="i" style="left:338px;top:950px" width="9" height="9" viewBox="0 0 9 9" fill="none" stroke="#bdbec8"><path d="M3.500 1H.5v7.500H8V5.500M5 .5h3.500V4M8.500.5L4 5"/></svg>
<span class="st" style="left:349px">Share</span>
<svg class="i" style="left:384px;top:950px" width="10" height="9" viewBox="0 0 10 9"><path fill="#bdbec8" d="M0 0h4l1 1.500h5V9H0z"/></svg>
<span class="st" style="left:397px">checkyoself</span>
<span class="st" style="left:459px">Jest: stopped</span>
<svg class="i" style="left:531px;top:950px" width="8" height="10" viewBox="0 0 8 10"><path fill="#bdbec8" d="M0 0h5l3 3v2l-3 1 3 2v2H0z"/></svg>
<span class="st" style="left:541.700px">0</span>
<svg class="i" style="left:559px;top:950px" width="8" height="10" viewBox="0 0 8 10"><path fill="#bdbec8" d="M0 0h5l3 3v2l-3 1 3 2v2H0z"/></svg>
<span class="st" style="left:569px">javascriptreact |</span>
<svg class="i" style="left:641.500px;top:950px" width="8" height="10" viewBox="0 0 8 10"><path fill="#bdbec8" d="M0 0h5l3 3v2l-3 1 3 2v2H0z"/></svg>
<span class="st" style="left:652px">index.js</span>
<svg class="i" style="left:695px;top:950px" width="10" height="10" viewBox="0 0 10 10" fill="none" stroke="#bdbec8"><circle cx="5" cy="5" r="4.500"/><path d="M5 2v3l2 1"/></svg>
<svg class="i" style="left:897px;top:952px" width="9" height="6" viewBox="0 0 9 6" fill="none" stroke="#bdbec8"><circle cx="4.500" cy="3" r="2"/><path d="M0 3h2.500M6.500 3H9"/></svg>
<span class="st" style="left:908.600px">You, 3 months ago</span>
<span class="st" style="left:1000.600px">Indents: 0</span>
<svg class="i" style="left:1054px;top:949px" width="10" height="12" viewBox="0 0 10 12" fill="none" stroke="#bdbec8"><circle cx="5" cy="5" r="4.500"/><circle cx="5" cy="5" r="2.300"/><path d="M5 5v6.500" stroke-width="2"/></svg>
<span class="st" style="left:1067.600px">Go Live</span>
<span class="st" style="left:1114px">Ln 1, Col 1</span>
<span class="st" style="left:1169px">Spaces: 2</span>
<span class="st" style="left:1222.400px">UTF-8</span>
<span class="st" style="left:1261.600px">LF</span>
<span class="st" style="left:1283px">JavaScript React</span>
<svg class="i" style="left:1366px;top:949.500px" width="18" height="11" viewBox="0 0 18 11"><path fill="#f3b33c" d="M4 0c3 0 4 2 4 5v5H0V5c0-3 1-5 4-5z"/><path fill="#e85a9a" d="M12 10L8.500 5.500C7.500 3 10.500 1 12 3.500 13.500 1 16.500 3 15.500 5.500z"/></svg>
<span class="st" style="left:1384px">: please take care</span>
<span class="st" style="left:1471px">Prettier</span>
<svg class="i" style="left:1514.500px;top:949.500px" width="11" height="11" viewBox="0 0 11 11"><circle cx="5.500" cy="5.500" r="5.300" fill="#bdbec8"/><path fill="#1e1f32" d="M3 3.500h1.500v2H3zM6.500 3.500H8v2H6.500z"/><path stroke="#1e1f32" fill="none" d="M2.800 7c1 2 4.400 2 5.400 0"/></svg>
<svg class="i" style="left:1537.500px;top:949.500px" width="9" height="11" viewBox="0 0 9 11"><path fill="#bdbec8" d="M4.500 0C6.500 0 7.500 1.500 7.500 4v3L9 9H0l1.500-2V4C1.500 1.500 2.500 0 4.500 0zM3.500 9.500h2L4.500 11z"/></svg>
</div>
</body></html>
